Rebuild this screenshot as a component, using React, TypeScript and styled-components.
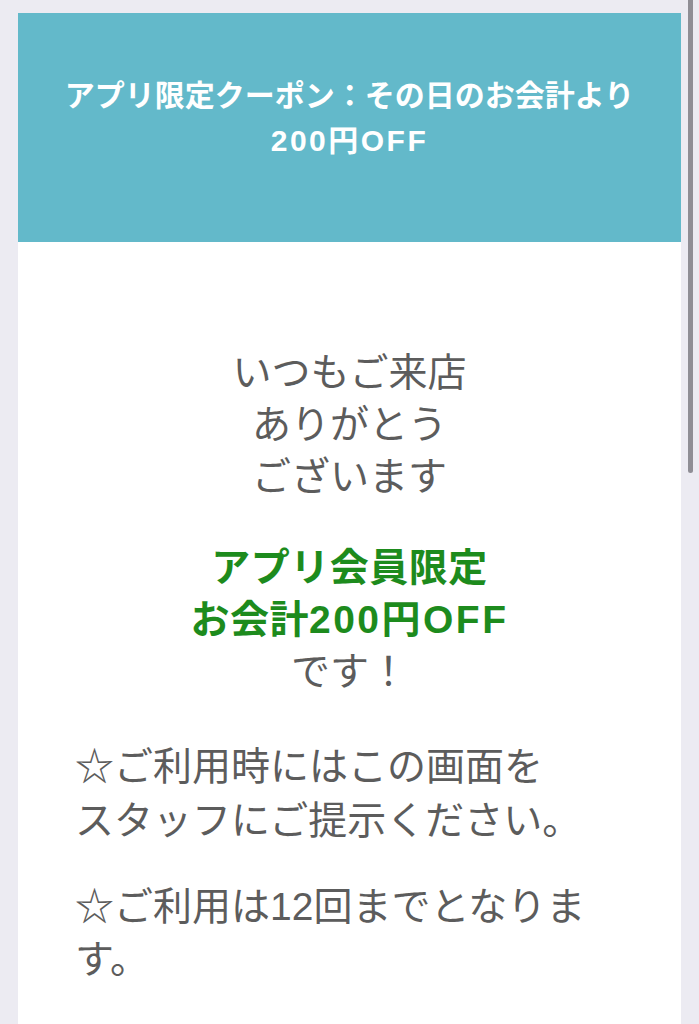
import React from 'react';
import styled, { createGlobalStyle } from 'styled-components';

const GlobalStyle = createGlobalStyle`
    html, body {
        margin: 0;
        padding: 0;
        background: #ecebf2;
        overflow: hidden;
    }
    body {
        font-family: "Liberation Sans", "Noto Sans CJK JP", sans-serif;
    }
`;

const Page = styled.div`
    min-height: 100vh;
    padding: 13px 18px 0 18px;
    box-sizing: border-box;
`;

const Card = styled.div`
    background: #ffffff;
    min-height: 1011px;
`;

const CouponHeader = styled.header`
    background: #63b9ca;
    height: 229px;
    box-sizing: border-box;
    padding: 60px 16px 0;
`;

const HeaderTitle = styled.h1`
    margin: 0;
    color: #ffffff;
    font-size: 30px;
    font-weight: 700;
    line-height: 45px;
    text-align: center;
`;

const CouponBody = styled.div`
    display: flex;
    flex-direction: column;
    padding: 105px 57px 40px;
`;

const Paragraph = styled.p<{ $align?: 'left' | 'center'; $space?: number; $lh?: number }>`
    margin: ${p => p.$space ?? 0}px 0 0;
    color: #5c5c5c;
    font-size: 39px;
    font-weight: 400;
    line-height: ${p => p.$lh ?? 52}px;
    text-align: ${p => p.$align ?? 'left'};
`;

const Emphasis = styled.strong`
    color: #1d8b1d;
    font-weight: 700;
    letter-spacing: 0.5px;
`;

const Amount = styled.span`
    letter-spacing: 2.5px;
`;

const ScrollThumb = styled.div`
    position: fixed;
    top: -6px;
    right: 6px;
    width: 5px;
    height: 479px;
    border-radius: 3px;
    background: #8f8e95;
`;

const App: React.FC = () => {
	return (
		<>
			<GlobalStyle />
			<Page>
				<Card>
					<CouponHeader>
						<HeaderTitle>
							アプリ限定クーポン：その日のお会計より<br /><Amount>200円OFF</Amount>
						</HeaderTitle>
					</CouponHeader>
					<CouponBody>
						<Paragraph $align="center">
							いつもご来店<br />ありがとう<br />ございます
						</Paragraph>
						<Paragraph $align="center" $space={39}>
							<Emphasis>
								アプリ会員限定<br />お会計<Amount>200円OFF</Amount>
							</Emphasis>
							<br />です！
						</Paragraph>
						<Paragraph $space={42} $lh={54}>
							☆ご利用時にはこの画面を<br />スタッフにご提示ください。
						</Paragraph>
						<Paragraph $space={32} $lh={53}>
							☆ご利用は12回までとなります。
						</Paragraph>
					</CouponBody>
				</Card>
			</Page>
			<ScrollThumb />
		</>
	);
};

export default App;
